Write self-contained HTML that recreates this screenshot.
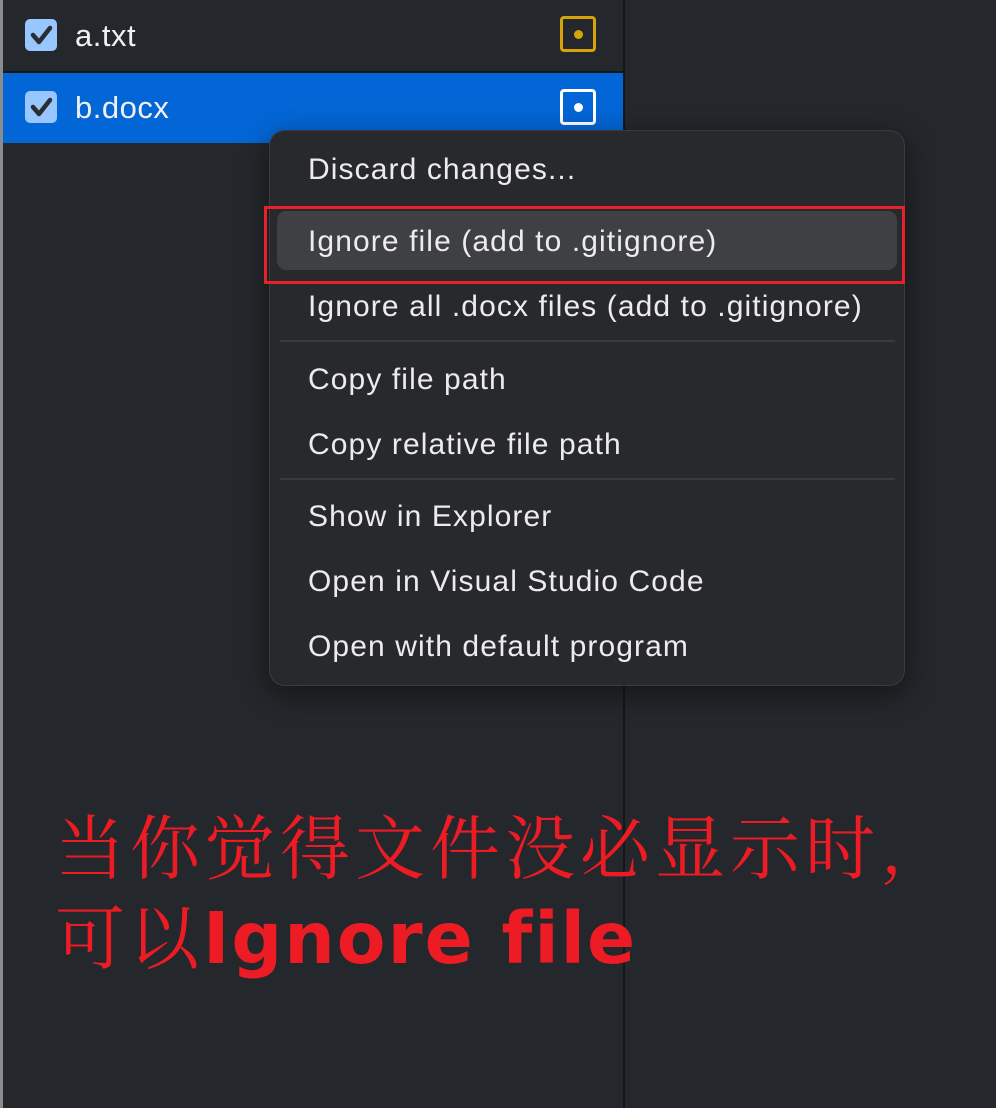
<!DOCTYPE html>
<html><head><meta charset="utf-8"><style>
*{margin:0;padding:0;box-sizing:border-box}
body{width:996px;height:1108px;background:#24272b;position:relative;overflow:hidden;font-family:"Liberation Sans","DejaVu Sans",sans-serif}
.abs{position:absolute}
.strip{left:0;top:0;width:3px;height:1108px;background:#8c8c8c}
.div{left:623px;top:0;width:2px;height:1108px;background:#151619}
.row{left:3px;width:620px;height:70px}
.cb{width:32px;height:32px;border-radius:5px;background:#98c6ff}
.cb svg{display:block}
.fname{color:#f0f0f0;font-size:31px;line-height:40px;left:75px;letter-spacing:0.5px}
.ico{width:36px;height:36px;border:3px solid;border-radius:4px}
.ico i{position:absolute;left:50%;top:50%;width:9px;height:9px;border-radius:50%;margin:-4.5px 0 0 -4.5px}
.menu{left:269px;top:130px;width:636px;height:556px;background:#28292d;border:1px solid #3a3b40;border-radius:16px;box-shadow:0 8px 30px rgba(0,0,0,.45)}
.it{left:308px;color:#ececec;font-size:30px;line-height:40px;height:40px;white-space:nowrap;letter-spacing:1.1px}
.sep{left:280px;width:615px;height:2px;background:#3a3b3f}
.hl{left:277px;top:211px;width:620px;height:59px;background:#3f4044;border-radius:9px}
.box{left:264px;top:206px;width:641px;height:78px;border:3px solid #e8202a}
.red{color:#ed1c24;left:55px;white-space:nowrap}
</style></head><body>
<div class="abs strip"></div>
<div class="abs div"></div>
<div class="abs row" style="top:0;background:#24272b"></div>
<div class="abs" style="left:3px;top:71px;width:620px;height:2px;background:#151619"></div>
<div class="abs row" style="top:73px;background:#0366d6"></div>
<div class="abs cb" style="left:25px;top:19px"><svg width="32" height="32"><path d="M8 16 L14 23 L25 9" stroke="#2b2d31" stroke-width="4.5" fill="none" stroke-linecap="round" stroke-linejoin="round"/></svg></div>
<div class="abs cb" style="left:25px;top:91px"><svg width="32" height="32"><path d="M8 16 L14 23 L25 9" stroke="#2b2d31" stroke-width="4.5" fill="none" stroke-linecap="round" stroke-linejoin="round"/></svg></div>
<div class="abs fname" style="top:16px">a.txt</div>
<div class="abs fname" style="top:88px">b.docx</div>
<div class="abs ico" style="left:560px;top:16px;border-color:#d6a407"><i style="background:#d6a407"></i></div>
<div class="abs ico" style="left:560px;top:89px;border-color:#fff"><i style="background:#fff"></i></div>

<div class="abs menu"></div>
<div class="abs hl"></div>
<div class="abs box"></div>
<div class="abs it" style="top:150px">Discard changes...</div>
<div class="abs it" style="top:222px">Ignore file (add to .gitignore)</div>
<div class="abs it" style="top:287px">Ignore all .docx files (add to .gitignore)</div>
<div class="abs sep" style="top:340px"></div>
<div class="abs it" style="top:360px">Copy file path</div>
<div class="abs it" style="top:425px">Copy relative file path</div>
<div class="abs sep" style="top:478px"></div>
<div class="abs it" style="top:497px">Show in Explorer</div>
<div class="abs it" style="top:562px">Open in Visual Studio Code</div>
<div class="abs it" style="top:627px">Open with default program</div>

<div class="abs red" style="top:799px;font-size:70px;line-height:90px;letter-spacing:5px;font-family:'Noto Serif CJK SC','Liberation Serif',serif">当你觉得文件没必显示时,</div>
<div class="abs red" style="top:889px;font-size:70px;line-height:90px;letter-spacing:4px;font-family:'Noto Serif CJK SC',serif">可以<span style="font-family:'DejaVu Sans',sans-serif;font-weight:bold;font-size:71px;letter-spacing:2px">Ignore file</span></div>
</body></html>
